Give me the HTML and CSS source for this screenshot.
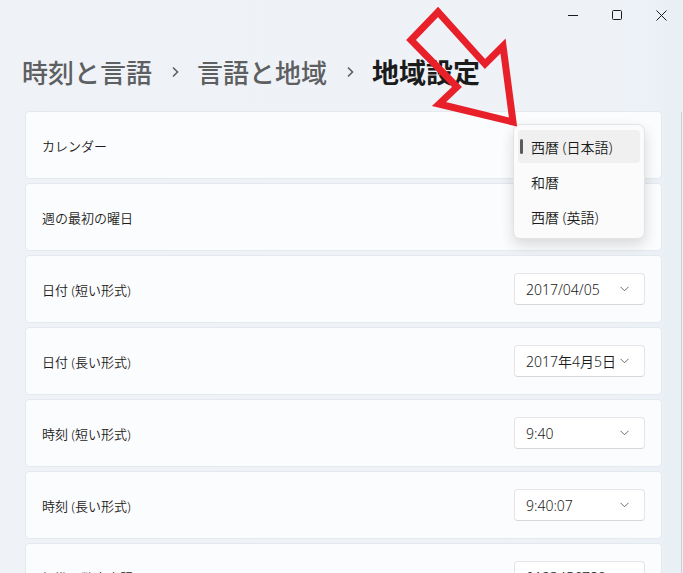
FILE: index.html
```html
<!DOCTYPE html>
<html lang="ja">
<head>
    <meta charset="UTF-8">
    <meta name="viewport" content="width=device-width, initial-scale=1.0">
    <title>地域設定</title>
    <link rel="stylesheet" href="styles.css">
</head>
<body>

    <div class="window">
        <!-- Title bar -->
        <div class="titlebar">
            <div class="caption-btn">
                <svg width="10" height="10" viewBox="0 0 10 10"><path d="M0 5.5H10" stroke="#1b1b1b" stroke-width="1"/></svg>
            </div>
            <div class="caption-btn">
                <svg width="10" height="10" viewBox="0 0 10 10"><rect x="0.5" y="0.5" width="9" height="9" rx="1" fill="none" stroke="#1b1b1b" stroke-width="1"/></svg>
            </div>
            <div class="caption-btn">
                <svg width="11" height="11" viewBox="0 0 11 11"><path d="M0.5 0.5L10.5 10.5M10.5 0.5L0.5 10.5" stroke="#1b1b1b" stroke-width="1"/></svg>
            </div>
        </div>

        <!-- Breadcrumb -->
        <h1 class="breadcrumb">
            <span class="crumb">時刻と言語</span>
            <svg class="sep" width="8" height="12" viewBox="0 0 8 12"><path d="M2 1.5L6.5 6L2 10.5" fill="none" stroke="#5d5f61" stroke-width="1.6"/></svg>
            <span class="crumb">言語と地域</span>
            <svg class="sep" width="8" height="12" viewBox="0 0 8 12"><path d="M2 1.5L6.5 6L2 10.5" fill="none" stroke="#5d5f61" stroke-width="1.6"/></svg>
            <span class="crumb current">地域設定</span>
        </h1>

        <!-- Settings list -->
        <div class="settings-list">
            <div class="setting-card">
                <span class="label">カレンダー</span>
            </div>
            <div class="setting-card">
                <span class="label">週の最初の曜日</span>
            </div>
            <div class="setting-card">
                <span class="label">日付 (短い形式)</span>
                <div class="combo"><span>2017/04/05</span><svg class="chev" width="9" height="6" viewBox="0 0 9 6"><path d="M0.5 0.8L4.5 4.8L8.5 0.8" fill="none" stroke="#6b6b6b" stroke-width="1"/></svg></div>
            </div>
            <div class="setting-card">
                <span class="label">日付 (長い形式)</span>
                <div class="combo"><span>2017年4月5日</span><svg class="chev" width="9" height="6" viewBox="0 0 9 6"><path d="M0.5 0.8L4.5 4.8L8.5 0.8" fill="none" stroke="#6b6b6b" stroke-width="1"/></svg></div>
            </div>
            <div class="setting-card">
                <span class="label">時刻 (短い形式)</span>
                <div class="combo"><span>9:40</span><svg class="chev" width="9" height="6" viewBox="0 0 9 6"><path d="M0.5 0.8L4.5 4.8L8.5 0.8" fill="none" stroke="#6b6b6b" stroke-width="1"/></svg></div>
            </div>
            <div class="setting-card">
                <span class="label">時刻 (長い形式)</span>
                <div class="combo"><span>9:40:07</span><svg class="chev" width="9" height="6" viewBox="0 0 9 6"><path d="M0.5 0.8L4.5 4.8L8.5 0.8" fill="none" stroke="#6b6b6b" stroke-width="1"/></svg></div>
            </div>
            <div class="setting-card">
                <span class="label">標準の数字表記</span>
                <div class="combo"><span>0123456789</span><svg class="chev" width="9" height="6" viewBox="0 0 9 6"><path d="M0.5 0.8L4.5 4.8L8.5 0.8" fill="none" stroke="#6b6b6b" stroke-width="1"/></svg></div>
            </div>
        </div>

        <div class="scrollbar"></div>

        <!-- Open calendar menu -->
        <div class="popup">
            <div class="popup-item selected">西暦 (日本語)</div>
            <div class="popup-item">和暦</div>
            <div class="popup-item">西暦 (英語)</div>
        </div>

        <!-- Red annotation arrow -->
        <svg class="arrow" width="683" height="140" viewBox="0 0 683 140">
            <polygon points="438,12 411,40 457,87 439,104 513,122 503,46 485,64" fill="none" stroke="#e8202a" stroke-width="7" stroke-linejoin="miter"/>
        </svg>
    </div>

</body>
</html>
```

FILE: styles.css
```css
/* General */
body {
    margin: 0;
    padding: 0;
    font-family: "Segoe UI", "Noto Sans", "Noto Sans CJK JP", sans-serif;
    color: #1b1b1b;
    background: #eef2f7;
    overflow: hidden;
}

.window {
    position: relative;
    width: 683px;
    height: 573px;
    overflow: hidden;
    background: linear-gradient(to right, #eff2f7 0%, #eef2f7 90%, #e8f0f5 100%);
}

/* Title bar */
.titlebar {
    height: 30px;
    display: flex;
    justify-content: flex-end;
}

.caption-btn {
    width: 44px;
    height: 30px;
    display: flex;
    align-items: center;
    justify-content: center;
}

/* Breadcrumb */
.breadcrumb {
    margin: 24px 0 21px 22px;
    height: 36px;
    display: flex;
    align-items: center;
    font-family: "Noto Sans CJK JP", sans-serif;
    font-size: 26px;
    line-height: 36px;
    font-weight: 500;
    color: #5d5f61;
}

.breadcrumb .sep {
    margin: 0 18px 0 19px;
}

.breadcrumb .current {
    color: #1b1b1b;
    font-size: 27px;
    font-weight: 700;
}

/* Settings list */
.settings-list {
    display: flex;
    flex-direction: column;
    gap: 4px;
    padding: 0 21px 0 25px;
}

.setting-card {
    height: 66px;
    display: flex;
    align-items: center;
    justify-content: space-between;
    padding: 0 16px;
    background: #fbfcfd;
    border: 1px solid #e5e8ec;
    border-radius: 4px;
}

.label {
    font-size: 13px;
    font-weight: 350;
}

.combo {
    width: 118px;
    height: 30px;
    display: flex;
    align-items: center;
    justify-content: space-between;
    padding-left: 11px;
    background: #ffffff;
    border: 1px solid #e3e5e8;
    border-bottom-color: #d6d8db;
    border-radius: 4px;
    font-size: 14px;
    font-weight: 350;
}

.combo .chev {
    margin-right: 15px;
}

/* Scrollbar strip */
.scrollbar {
    position: absolute;
    right: 1px;
    top: 112px;
    bottom: 0;
    width: 1px;
    background: #c9d0d6;
}

/* Dropdown popup */
.popup {
    position: absolute;
    left: 513px;
    top: 124px;
    width: 132px;
    padding: 3px 0;
    background: #fbfbfb;
    border: 1px solid #e2e3e5;
    border-radius: 7px;
    box-shadow: 0 6px 14px rgba(0, 0, 0, 0.14);
    box-sizing: border-box;
}

.popup-item {
    position: relative;
    height: 33px;
    margin: 2px 4px;
    padding-left: 13px;
    display: flex;
    align-items: center;
    font-size: 14px;
    font-weight: 350;
    border-radius: 4px;
}

.popup-item.selected {
    background: #f0f0f0;
}

.popup-item.selected::before {
    content: "";
    position: absolute;
    left: 2px;
    top: 9px;
    width: 3px;
    height: 15px;
    border-radius: 2px;
    background: #5b5b5b;
}

/* Annotation arrow */
.arrow {
    position: absolute;
    left: 0;
    top: 0;
    pointer-events: none;
}
```
